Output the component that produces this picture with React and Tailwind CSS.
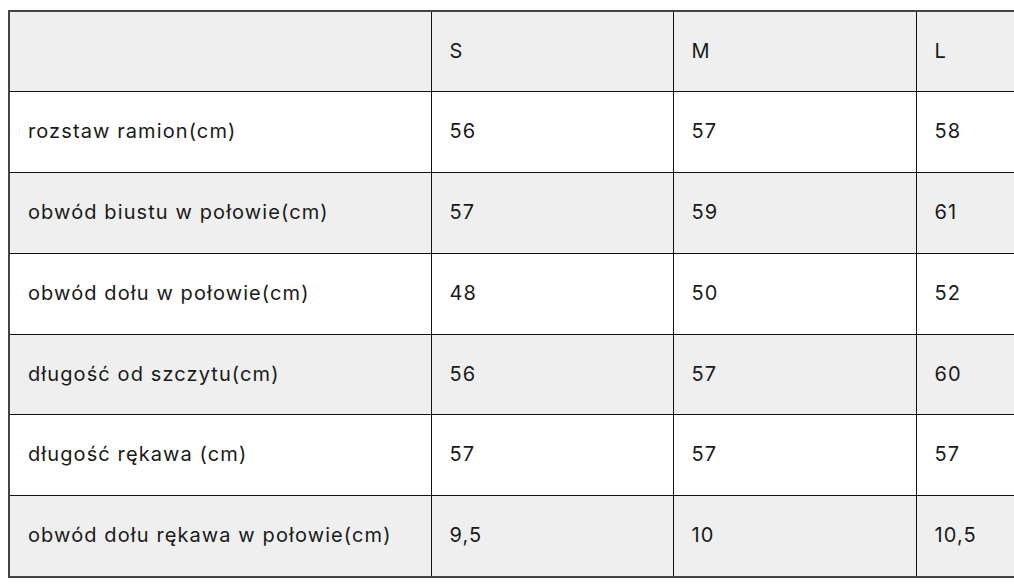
import React from 'react';

const rows = [
  ['rozstaw ramion(cm)', '56', '57', '58'],
  ['obwód biustu w połowie(cm)', '57', '59', '61'],
  ['obwód dołu w połowie(cm)', '48', '50', '52'],
  ['długość od szczytu(cm)', '56', '57', '60'],
  ['długość rękawa (cm)', '57', '57', '57'],
  ['obwód dołu rękawa w połowie(cm)', '9,5', '10', '10,5'],
];

export default function App() {
  return (
    <div
      className="w-[1014px] h-[586px] overflow-hidden bg-white pl-2 pt-[10px] text-[#1a1a1a]"
      style={{ fontFamily: 'Inter, "Noto Sans", sans-serif' }}
    >
      <table className="border-collapse table-fixed w-[1152px] border-2 border-[#444] text-[20px] tracking-[0.055em]">
        <colgroup>
          <col className="w-[422px]" />
          <col className="w-[242px]" />
          <col className="w-[243px]" />
          <col className="w-[245px]" />
        </colgroup>
        <thead>
          <tr className="h-[80.8px] bg-[#efefef]">
            <th className="border border-[#111] px-[18px] pb-[2px] text-left font-normal"></th>
            <th className="border border-[#111] px-[18px] pb-[2px] text-left font-normal">S</th>
            <th className="border border-[#111] px-[18px] pb-[2px] text-left font-normal">M</th>
            <th className="border border-[#111] px-[18px] pb-[2px] text-left font-normal">L</th>
          </tr>
        </thead>
        <tbody>
          {rows.map((r, i) => (
            <tr key={i} className={i % 2 === 0 ? 'h-[80.8px] bg-white' : 'h-[80.8px] bg-[#efefef]'}>
              {r.map((c, j) => (
                <td key={j} className="border border-[#111] px-[18px] pb-[2px]">
                  {c}
                </td>
              ))}
            </tr>
          ))}
        </tbody>
      </table>
    </div>
  );
}
